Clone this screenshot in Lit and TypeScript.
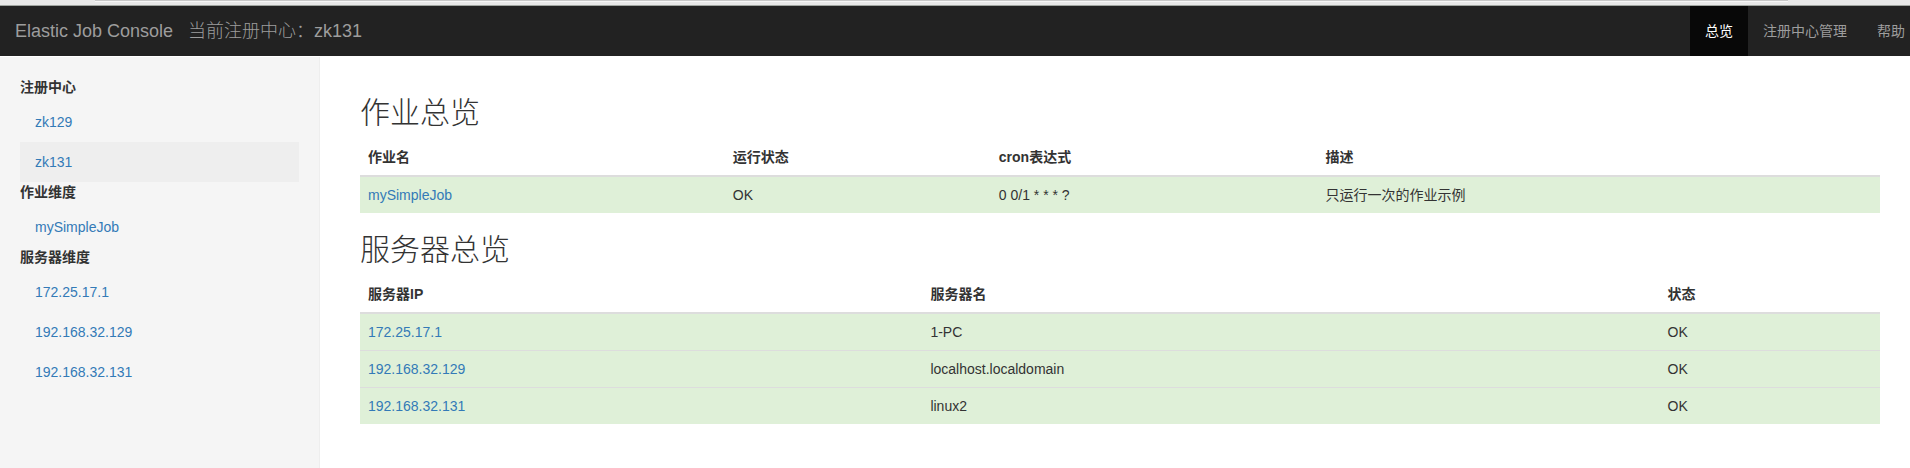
import { LitElement, html, css } from "lit";
import { customElement, property } from "lit/decorators.js";
import { classMap } from "lit/directives/class-map.js";
import { styleMap } from "lit/directives/style-map.js";

interface Entry {
  label: string;
  active?: boolean;
}

interface Group {
  title: string;
  items: Entry[];
}

interface Column {
  label: string;
  share: number;
}

const NAV: Entry[] = [
  { label: "总览", active: true },
  { label: "注册中心管理" },
  { label: "帮助" },
];

const GROUPS: Group[] = [
  { title: "注册中心", items: [{ label: "zk129" }, { label: "zk131", active: true }] },
  { title: "作业维度", items: [{ label: "mySimpleJob" }] },
  {
    title: "服务器维度",
    items: [{ label: "172.25.17.1" }, { label: "192.168.32.129" }, { label: "192.168.32.131" }],
  },
];

const JOB_COLUMNS: Column[] = [
  { label: "作业名", share: 24 },
  { label: "运行状态", share: 17.5 },
  { label: "cron表达式", share: 21.5 },
  { label: "描述", share: 37 },
];

const SERVER_COLUMNS: Column[] = [
  { label: "服务器IP", share: 37 },
  { label: "服务器名", share: 48.5 },
  { label: "状态", share: 14.5 },
];

@customElement("console-navbar")
export class ConsoleNavbar extends LitElement {
  @property() registry = "";

  static styles = css`
    :host {
      display: block;
    }
    .bar {
      display: flex;
      justify-content: space-between;
      background: #222;
      line-height: 20px;
    }
    .titles {
      display: flex;
      gap: 15px;
      padding: 15px;
      font-size: 18px;
      color: #9d9d9d;
    }
    .brand,
    .link {
      color: #9d9d9d;
      text-decoration: none;
    }
    .current {
      font-weight: 300;
    }
    .menu {
      display: flex;
      margin: 0;
      padding: 0;
      list-style: none;
    }
    .link {
      display: block;
      padding: 15px;
    }
    .item:last-child .link {
      padding-right: 5px;
    }
    .link.active {
      color: #fff;
      background: #080808;
    }
  `;

  render() {
    return html`
      <nav class="bar">
        <div class="titles">
          <a class="brand" href="#">Elastic Job Console</a>
          <span class="current">当前注册中心：${this.registry}</span>
        </div>
        <ul class="menu">
          ${NAV.map(
            (n) => html`<li class="item">
              <a class=${classMap({ link: true, active: !!n.active })} href="#">${n.label}</a>
            </li>`
          )}
        </ul>
      </nav>
    `;
  }
}

@customElement("console-sidebar")
export class ConsoleSidebar extends LitElement {
  static styles = css`
    :host {
      display: block;
      box-sizing: border-box;
      padding: 20px;
      background: #f5f5f5;
      border-right: 1px solid #eee;
    }
    .title {
      margin: 0 0 5px;
      font-size: 14px;
      line-height: 20px;
      font-weight: 700;
    }
    .list {
      margin: 0;
      padding: 0;
      list-style: none;
    }
    .link {
      display: block;
      padding: 10px 15px;
      color: #337ab7;
      text-decoration: none;
    }
    .link.active {
      background: #eee;
    }
  `;

  render() {
    return GROUPS.map(
      (g) => html`
        <h2 class="title">${g.title}</h2>
        <ul class="list">
          ${g.items.map(
            (i) => html`<li>
              <a class=${classMap({ link: true, active: !!i.active })} href="#">${i.label}</a>
            </li>`
          )}
        </ul>
      `
    );
  }
}

@customElement("overview-table")
export class OverviewTable extends LitElement {
  @property() heading = "";
  @property({ attribute: false }) columns: Column[] = [];
  @property({ attribute: false }) rows: string[][] = [];

  static styles = css`
    :host {
      display: block;
    }
    .heading {
      margin: 0 0 10px;
      font-size: 30px;
      line-height: 33px;
      font-weight: 300;
    }
    .table {
      width: 100%;
      border-spacing: 0;
    }
    .table th,
    .table td {
      padding: 8px;
      text-align: left;
    }
    .table th {
      border-bottom: 2px solid #ddd;
    }
    .table td {
      background: #dff0d8;
    }
    .table tr + tr td {
      border-top: 1px solid #ddd;
    }
    .link {
      color: #337ab7;
      text-decoration: none;
    }
  `;

  render() {
    return html`
      <h1 class="heading" id="heading">${this.heading}</h1>
      <table class="table" aria-labelledby="heading">
        <colgroup>
          ${this.columns.map((c) => html`<col style=${styleMap({ width: `${c.share}%` })} />`)}
        </colgroup>
        <thead>
          <tr>
            ${this.columns.map((c) => html`<th scope="col">${c.label}</th>`)}
          </tr>
        </thead>
        <tbody>
          ${this.rows.map(
            (r) => html`<tr>
              ${r.map((c, i) => html`<td>${i === 0 ? html`<a class="link" href="#">${c}</a>` : c}</td>`)}
            </tr>`
          )}
        </tbody>
      </table>
    `;
  }
}

@customElement("app-root")
export class AppRoot extends LitElement {
  static styles = css`
    :host {
      display: flex;
      flex-direction: column;
      min-height: 100vh;
      background: #fff;
      color: #333;
      font-family: "Liberation Sans", "Noto Sans CJK SC", sans-serif;
      font-size: 14px;
      line-height: 20px;
    }
    .edge {
      height: 5px;
      background: #e8e8e8;
      border-bottom: 1px solid #a0a5a0;
    }
    .field {
      height: 1px;
      margin: 0 122px 0 95px;
      background: #c8c8c8;
      border-bottom: 1px solid #f6f6f6;
    }
    .body {
      display: flex;
      flex: 1;
      margin-top: 1px;
    }
    .side {
      flex: none;
      width: 320px;
    }
    .main {
      display: flex;
      flex: 1;
      flex-direction: column;
      gap: 20px;
      padding: 39px 30px 40px 40px;
    }
  `;

  render() {
    return html`
      <div class="edge"><div class="field"></div></div>
      <console-navbar registry="zk131"></console-navbar>
      <div class="body">
        <console-sidebar class="side"></console-sidebar>
        <main class="main">
          <overview-table
            heading="作业总览"
            .columns=${JOB_COLUMNS}
            .rows=${[["mySimpleJob", "OK", "0 0/1 * * * ?", "只运行一次的作业示例"]]}
          ></overview-table>
          <overview-table
            heading="服务器总览"
            .columns=${SERVER_COLUMNS}
            .rows=${[
              ["172.25.17.1", "1-PC", "OK"],
              ["192.168.32.129", "localhost.localdomain", "OK"],
              ["192.168.32.131", "linux2", "OK"],
            ]}
          ></overview-table>
        </main>
      </div>
    `;
  }
}
